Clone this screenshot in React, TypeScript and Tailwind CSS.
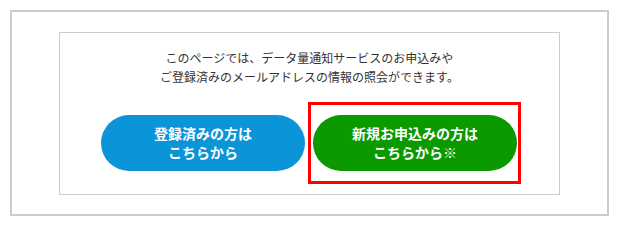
export default function App() {
  return (
    <div
      className="min-h-[229px] bg-white pt-[10px] pl-[10px]"
      style={{ fontFamily: '"Noto Sans CJK JP", "Noto Sans", sans-serif' }}
    >
      <div className="w-[599px] border-2 border-[#cccccc] px-[47px] pt-[20px] pb-[19px]">
        <div className="border border-[#cccccc] pt-[15px] pb-[10px]">
          <p className="text-center text-[12px] leading-[19px] text-[#333333]">
            このページでは、データ量通知サービスのお申込みや
            <br />
            ご登録済みのメールアドレスの情報の照会ができます。
          </p>
          <div className="mt-[16px] flex items-center justify-center gap-[3px] pl-[3px]">
            <a
              href="#"
              className="flex h-[56px] w-[204px] flex-col items-center justify-center rounded-full bg-[#0b95d8] text-center text-[14px] font-bold leading-[19px] text-white"
            >
              <span>登録済みの方は</span>
              <span>こちらから</span>
            </a>
            <div className="border-[3px] border-[#ff0000] py-[10px] pl-[2px] pr-[1px]">
              <a
                href="#"
                className="flex h-[56px] w-[204px] flex-col items-center justify-center rounded-full bg-[#0b9900] text-center text-[14px] font-bold leading-[19px] text-white"
              >
                <span>新規お申込みの方は</span>
                <span>こちらから※</span>
              </a>
            </div>
          </div>
        </div>
      </div>
    </div>
  );
}
